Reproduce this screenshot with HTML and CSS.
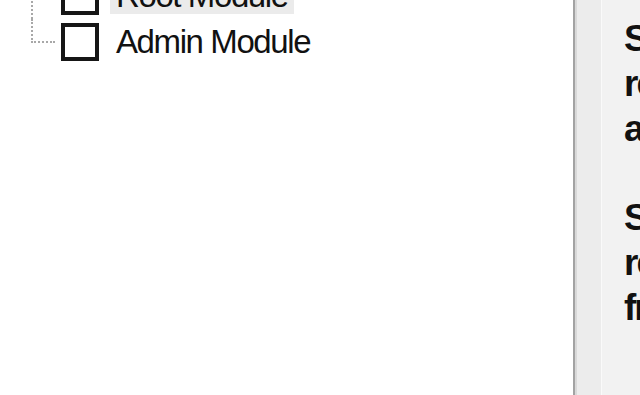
FILE: index.html
```html
<!DOCTYPE html>
<html lang="en">
<head>
    <meta charset="UTF-8">
    <title>Setup - Select Modules</title>
    <link rel="stylesheet" href="styles.css">
</head>
<body>
    <div class="window">
        <div class="tree-pane">
            <ul class="tree">
                <li class="node">
                    <span class="branch"></span>
                    <span class="check"></span>
                    <span class="label selected">Root Module</span>
                </li>
                <li class="node last">
                    <span class="branch"></span>
                    <span class="check"></span>
                    <span class="label">Admin Module</span>
                </li>
            </ul>
        </div>
        <div class="info-pane">
            <div class="info">
                <p>Select the modules<br>required for this<br>application.</p>
                <p>Selected modules are<br>removed or installed<br>from the server.</p>
            </div>
        </div>
    </div>
</body>
</html>
```

FILE: styles.css
```css
/* General Styles */
body {
    margin: 0;
    padding: 0;
    background-color: #fff;
    font-family: 'Liberation Sans', Arial, sans-serif;
    color: #111;
    overflow: hidden;
}

.window {
    display: flex;
    width: 640px;
    height: 395px;
    overflow: hidden;
}

/* Tree */
.tree-pane {
    width: 573px;
    flex-shrink: 0;
    background: #fff;
}

.tree {
    list-style: none;
    margin: -27px 0 0 0;
    padding: 0;
}

.node {
    display: flex;
    align-items: center;
    height: 46px;
}

.branch {
    align-self: stretch;
    width: 22px;
    margin-left: 31px;
    margin-right: 6px;
    border-left: 2px dotted #a8a8a8;
}

.node.last .branch {
    align-self: flex-start;
    height: 22px;
    border-bottom: 2px dotted #a8a8a8;
}

.check {
    width: 30px;
    height: 30px;
    border: 4px solid #161616;
    background: #fff;
    flex-shrink: 0;
}

.label {
    margin-left: 11px;
    padding: 0 6px;
    font-size: 33px;
    letter-spacing: -1.4px;
    line-height: 36px;
    white-space: nowrap;
}

.label.selected {
    background: #ebebeb;
}

/* Info panel */
.info-pane {
    flex: 1;
    display: flex;
    border-left: 2px solid #a3a3a3;
    box-shadow: inset 2px 0 0 #d9d9d9;
    background: #ececec;
    padding-left: 26px;
}

.info {
    flex: 1;
    border-left: 1px solid #fafafa;
    background: #f2f2f2;
    padding-left: 22px;
    overflow: hidden;
}

.info p {
    margin: 16px 0 44px 0;
    font-size: 37px;
    font-weight: bold;
    letter-spacing: -2px;
    line-height: 45px;
    white-space: nowrap;
}
```
